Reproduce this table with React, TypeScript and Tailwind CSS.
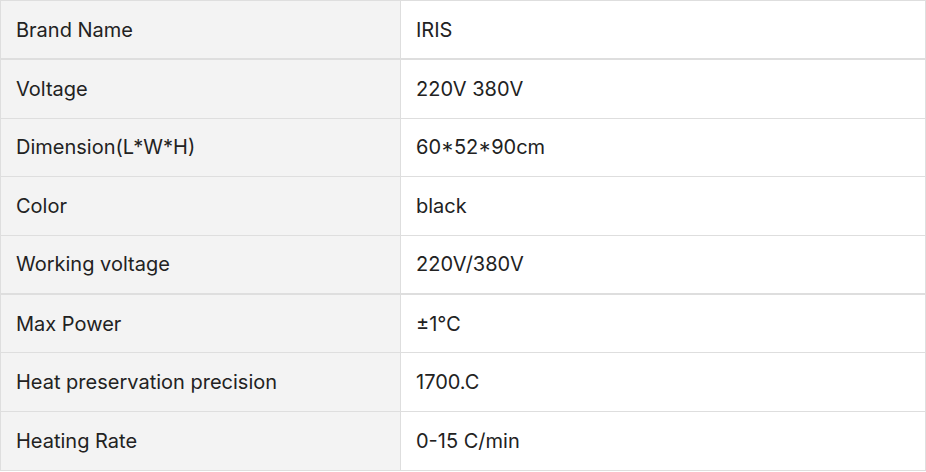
const rows: [string, string][] = [
  ['Brand Name', 'IRIS'],
  ['Voltage', '220V 380V'],
  ['Dimension(L*W*H)', '60*52*90cm'],
  ['Color', 'black'],
  ['Working voltage', '220V/380V'],
  ['Max Power', '±1℃'],
  ['Heat preservation precision', '1700.C'],
  ['Heating Rate', '0-15 C/min'],
];

export default function App() {
  return (
    <div className="w-[926px] h-[472px] bg-white font-['Inter','Liberation_Sans',sans-serif] text-[20px] text-[#222]">
      <div className="border-t border-[#dedede]">
        {rows.map(([k, v], i) => (
          <div
            key={k}
            className={`flex border-b border-[#dedede] ${i === 0 || i === 4 ? 'h-[59px] border-b-2' : 'h-[58.6px]'}`}
          >
            <div className="w-[401px] shrink-0 bg-[#f3f3f3] border-l border-r border-[#dedede] flex items-center pl-[15px]">{k}</div>
            <div className="flex-1 flex items-center pl-[15px] border-r border-[#dedede]">{v}</div>
          </div>
        ))}
      </div>
    </div>
  );
}
